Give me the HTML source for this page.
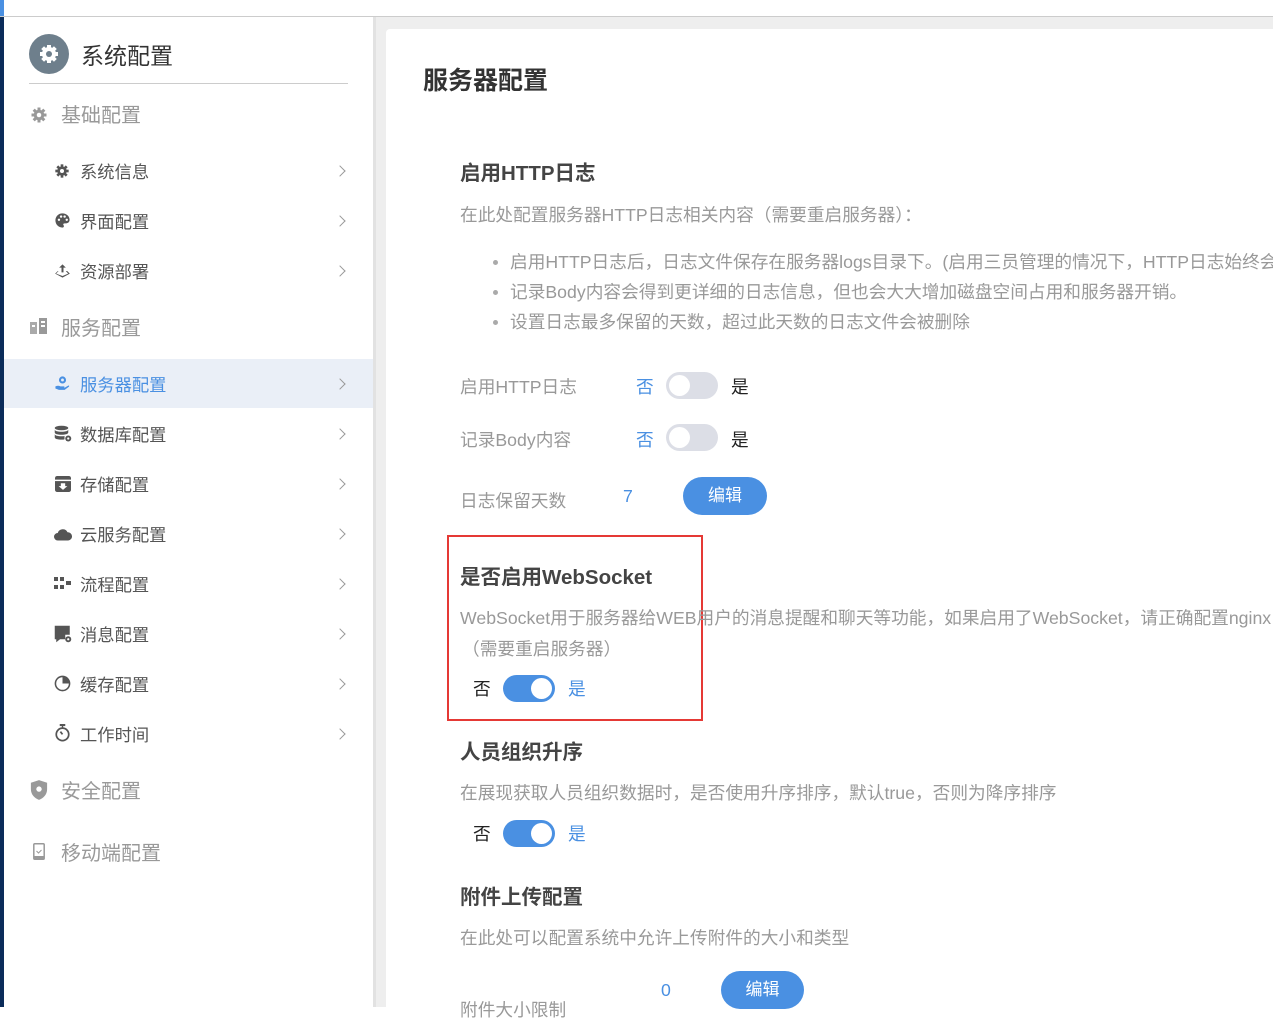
<!DOCTYPE html>
<html><head><meta charset="utf-8">
<style>
*{margin:0;padding:0;box-sizing:border-box}
body{width:1273px;height:1007px;overflow:hidden;background:#fff;position:relative;font-family:"Liberation Sans","Noto Sans CJK SC",sans-serif;}
.a{position:absolute;white-space:nowrap}
.si{font-size:17.3px;color:#555;line-height:24px}
.sg{font-size:20px;color:#999;line-height:26px}
.chev{position:absolute;left:336px;width:8px;height:8px;border-right:1.3px solid #999;border-top:1.3px solid #999;transform:rotate(45deg)}
.ic{position:absolute;left:54px}
.t{font-size:20.5px;font-weight:bold;color:#444;line-height:26px}
.d{font-size:17.7px;color:#999;line-height:24px}
.sw{position:absolute;width:52px;height:27px;border-radius:14px;background:#dcdee6}
.sw::after{content:"";position:absolute;top:3px;left:3px;width:21px;height:21px;border-radius:50%;background:#fff}
.sw.on{background:#4a90e2}
.sw.on::after{left:28px}
.btn{position:absolute;height:38px;border-radius:19px;background:#4a90e2;color:#fff;font-size:17px;line-height:38px;text-align:center}
.blue{color:#4a90e2}
</style></head><body>
<div class="a" style="left:0;top:0;width:4px;height:16px;background:#4a90e2"></div>
<div class="a" style="left:0;top:16px;width:4px;height:991px;background:#0b2c5a"></div>
<div class="a" style="left:0;top:16px;width:1273px;height:1px;background:#ccc"></div>
<div class="a" style="left:373px;top:17px;width:900px;height:990px;background:#eeeeee"></div>
<div class="a" style="left:373px;top:17px;width:3px;height:990px;background:#e2e2e2"></div>
<div class="a" style="left:386px;top:29px;width:887px;height:978px;background:#fff;border-radius:4px 0 0 0"></div>

<!-- sidebar -->
<div class="a" style="left:29px;top:34px;width:40px;height:40px;border-radius:50%;background:#6e7f8c"></div>
<svg class="a" style="left:37px;top:42px" width="24" height="24" viewBox="0 0 24 24"><g fill="#fff"><circle cx="12" cy="12" r="7"/><rect x="10" y="3" width="4" height="18"/><rect x="3" y="10" width="18" height="4"/><rect x="10" y="3" width="4" height="18" transform="rotate(45 12 12)"/><rect x="10" y="3" width="4" height="18" transform="rotate(-45 12 12)"/></g><circle cx="12" cy="12" r="3" fill="#6e7f8c"/></svg>
<div class="a" style="left:81px;top:41px;font-size:23px;color:#333;line-height:30px">系统配置</div>
<div class="a" style="left:29px;top:83px;width:319px;height:1px;background:#ccc"></div>

<svg class="a" style="left:30px;top:106px" width="18" height="18" viewBox="0 0 24 24"><g fill="#999"><circle cx="12" cy="12" r="7"/><rect x="10" y="2" width="4" height="20"/><rect x="2" y="10" width="20" height="4"/><rect x="10" y="2" width="4" height="20" transform="rotate(45 12 12)"/><rect x="10" y="2" width="4" height="20" transform="rotate(-45 12 12)"/></g><circle cx="12" cy="12" r="3" fill="#fff"/></svg>
<div class="a sg" style="left:61px;top:103px">基础配置</div>

<svg class="ic" style="top:163px" width="16" height="16" viewBox="0 0 24 24"><g fill="#555"><circle cx="12" cy="12" r="7"/><rect x="10" y="2" width="4" height="20"/><rect x="2" y="10" width="20" height="4"/><rect x="10" y="2" width="4" height="20" transform="rotate(45 12 12)"/><rect x="10" y="2" width="4" height="20" transform="rotate(-45 12 12)"/></g><circle cx="12" cy="12" r="3" fill="#fff"/></svg>
<div class="a si" style="left:80px;top:160px">系统信息</div><div class="chev" style="top:167px"></div>

<svg class="ic" style="top:212px" width="17" height="17" viewBox="0 0 24 24"><path d="M12 2C6 2 2 6.5 2 12s4.5 10 10 10c1.5 0 2-1 2-2s-1-1.5-1-2.5 1-1.5 2-1.5h2c3 0 5-2 5-5C22 6 17.5 2 12 2z" fill="#555"/><circle cx="7" cy="11" r="1.7" fill="#fff"/><circle cx="10" cy="6.5" r="1.7" fill="#fff"/><circle cx="15" cy="6.5" r="1.7" fill="#fff"/><circle cx="18" cy="11" r="1.7" fill="#fff"/></svg>
<div class="a si" style="left:80px;top:210px">界面配置</div><div class="chev" style="top:217px"></div>

<svg class="ic" style="top:263px" width="17" height="16" viewBox="0 0 24 24"><path d="M12 2l-5 5h3.5v7h3V7H17z" fill="#555"/><path d="M5 12L1 16l11 6 11-6-4-4h-2l3.5 4L12 19.5 2.5 16 6 12z" fill="#555"/></svg>
<div class="a si" style="left:80px;top:260px">资源部署</div><div class="chev" style="top:267px"></div>

<svg class="a" style="left:30px;top:318px" width="18" height="16" viewBox="0 0 18 16"><rect x="0" y="4" width="7" height="12" fill="#aaa"/><rect x="9" y="0" width="8" height="16" fill="#999"/><rect x="2" y="7" width="3" height="2" fill="#fff"/><rect x="11" y="3" width="4" height="2" fill="#fff"/><rect x="11" y="7" width="4" height="2" fill="#fff"/></svg>
<div class="a sg" style="left:61px;top:316px">服务配置</div>

<div class="a" style="left:4px;top:359px;width:369px;height:49px;background:#eaeff7"></div>
<svg class="ic" style="top:375px" width="17" height="17" viewBox="0 0 24 24"><circle cx="12" cy="7" r="5" fill="#4a90e2"/><circle cx="12" cy="7" r="2" fill="#eaeff7"/><path d="M2 16c3-1 5-1 7 0h5c1 0 1 2 0 2h-4 5l5-3c1-.5 2 .5 1 1.5L15 21H7l-5-2z" fill="#4a90e2"/></svg>
<div class="a si" style="left:80px;top:373px;color:#4a90e2">服务器配置</div><div class="chev" style="top:380px"></div>

<svg class="ic" style="top:425px" width="18" height="18" viewBox="0 0 24 24"><g fill="#555"><ellipse cx="10" cy="4" rx="9" ry="3"/><path d="M1 6c0 2 4 3 9 3s9-1 9-3v4c0 2-4 3-9 3s-9-1-9-3z"/><path d="M1 12c0 2 4 3 9 3 2 0 3 0 4-.5V19c-1 .5-2 .5-4 .5-5 0-9-1-9-3z"/><circle cx="19" cy="18" r="4"/></g><circle cx="19" cy="18" r="1.5" fill="#fff"/></svg>
<div class="a si" style="left:80px;top:423px">数据库配置</div><div class="chev" style="top:430px"></div>

<svg class="ic" style="top:476px" width="18" height="16" viewBox="0 0 24 22"><rect x="1" y="0" width="22" height="22" rx="3" fill="#555"/><rect x="1" y="5" width="22" height="2" fill="#fff"/><path d="M9 10h6v4h3l-6 5-6-5h3z" fill="#fff"/></svg>
<div class="a si" style="left:80px;top:473px">存储配置</div><div class="chev" style="top:480px"></div>

<svg class="ic" style="top:528px" width="18" height="13" viewBox="0 0 24 16"><path d="M5 16a5 5 0 010-10 7 7 0 0113-1 5.5 5.5 0 011 11z" fill="#555"/></svg>
<div class="a si" style="left:80px;top:523px">云服务配置</div><div class="chev" style="top:530px"></div>

<svg class="ic" style="top:577px" width="18" height="13" viewBox="0 0 18 13"><g fill="#555"><rect x="0" y="0" width="4" height="4"/><rect x="6" y="0" width="4" height="4"/><rect x="12" y="4" width="5" height="4"/><rect x="0" y="8" width="4" height="4"/><rect x="6" y="8" width="4" height="4"/></g></svg>
<div class="a si" style="left:80px;top:573px">流程配置</div><div class="chev" style="top:580px"></div>

<svg class="ic" style="top:625px" width="18" height="18" viewBox="0 0 24 24"><path d="M1 1h20v12h-6v6H8l-5 4v-4H1z" fill="#555"/><circle cx="19" cy="19" r="4" fill="#555"/><circle cx="19" cy="19" r="1.5" fill="#fff"/></svg>
<div class="a si" style="left:80px;top:623px">消息配置</div><div class="chev" style="top:630px"></div>

<svg class="ic" style="top:675px" width="17" height="17" viewBox="0 0 24 24"><circle cx="12" cy="12" r="10" fill="none" stroke="#555" stroke-width="2.2"/><path d="M12 2a10 10 0 0110 10H12z" fill="#555"/></svg>
<div class="a si" style="left:80px;top:673px">缓存配置</div><div class="chev" style="top:680px"></div>

<svg class="ic" style="top:724px" width="17" height="18" viewBox="0 0 24 26"><rect x="8" y="0" width="8" height="3" fill="#555"/><rect x="11" y="2" width="2" height="4" fill="#555"/><circle cx="12" cy="15" r="9" fill="none" stroke="#555" stroke-width="2.5"/><path d="M12 15l-3-4" stroke="#555" stroke-width="2.5"/></svg>
<div class="a si" style="left:80px;top:723px">工作时间</div><div class="chev" style="top:730px"></div>

<svg class="a" style="left:30px;top:780px" width="18" height="20" viewBox="0 0 20 22"><path d="M10 0l9 3v7c0 6-4 10-9 12C5 20 1 16 1 10V3z" fill="#999"/><circle cx="10" cy="10" r="3" fill="#fff"/></svg>
<div class="a sg" style="left:61px;top:779px">安全配置</div>

<svg class="a" style="left:33px;top:843px" width="12" height="17" viewBox="0 0 12 17"><rect x="0.8" y="0.8" width="10.4" height="15.4" rx="1" fill="none" stroke="#999" stroke-width="1.5"/><rect x="1" y="13" width="10" height="3" fill="#999"/><path d="M3.5 8l2 2 3-3" stroke="#999" fill="none"/></svg>
<div class="a sg" style="left:61px;top:841px">移动端配置</div>

<!-- content -->
<div class="a" style="left:423px;top:65px;font-size:25px;font-weight:bold;color:#333;line-height:32px">服务器配置</div>

<div class="a t" style="left:460px;top:161px">启用HTTP日志</div>
<div class="a d" style="left:460px;top:203px">在此处配置服务器HTTP日志相关内容（需要重启服务器）：</div>
<div class="a" style="left:493px;top:260px;width:5px;height:5px;border-radius:50%;background:#aaa"></div>
<div class="a" style="left:493px;top:290px;width:5px;height:5px;border-radius:50%;background:#aaa"></div>
<div class="a" style="left:493px;top:320px;width:5px;height:5px;border-radius:50%;background:#aaa"></div>
<div class="a d" style="left:510px;top:250px">启用HTTP日志后，日志文件保存在服务器logs目录下。(启用三员管理的情况下，HTTP日志始终会启用)</div>
<div class="a d" style="left:510px;top:280px">记录Body内容会得到更详细的日志信息，但也会大大增加磁盘空间占用和服务器开销。</div>
<div class="a d" style="left:510px;top:310px">设置日志最多保留的天数，超过此天数的日志文件会被删除</div>

<div class="a d" style="left:460px;top:375px">启用HTTP日志</div>
<div class="a d blue" style="left:636px;top:375px">否</div>
<div class="sw" style="left:666px;top:372px"></div>
<div class="a d" style="left:731px;top:375px;color:#222">是</div>

<div class="a d" style="left:460px;top:428px">记录Body内容</div>
<div class="a d blue" style="left:636px;top:428px">否</div>
<div class="sw" style="left:666px;top:424px"></div>
<div class="a d" style="left:731px;top:428px;color:#222">是</div>

<div class="a d" style="left:460px;top:489px">日志保留天数</div>
<div class="a d blue" style="left:623px;top:484px">7</div>
<div class="btn" style="left:683px;top:477px;width:84px">编辑</div>

<div class="a" style="left:447px;top:535px;width:256px;height:186px;border:2px solid #e53935"></div>
<div class="a t" style="left:460px;top:565px">是否启用WebSocket</div>
<div class="a d" style="left:460px;top:606px">WebSocket用于服务器给WEB用户的消息提醒和聊天等功能，如果启用了WebSocket，请正确配置nginx</div>
<div class="a d" style="left:462px;top:637px">（需要重启服务器）</div>
<div class="a d" style="left:473px;top:677px;color:#222">否</div>
<div class="sw on" style="left:503px;top:675px"></div>
<div class="a d blue" style="left:568px;top:677px">是</div>

<div class="a t" style="left:460px;top:740px">人员组织升序</div>
<div class="a d" style="left:460px;top:781px">在展现获取人员组织数据时，是否使用升序排序，默认true，否则为降序排序</div>
<div class="a d" style="left:473px;top:822px;color:#222">否</div>
<div class="sw on" style="left:503px;top:820px"></div>
<div class="a d blue" style="left:568px;top:822px">是</div>

<div class="a t" style="left:460px;top:885px">附件上传配置</div>
<div class="a d" style="left:460px;top:926px">在此处可以配置系统中允许上传附件的大小和类型</div>
<div class="a d blue" style="left:661px;top:978px">0</div>
<div class="btn" style="left:721px;top:971px;width:83px">编辑</div>
<div class="a d" style="left:460px;top:998px">附件大小限制</div>
</body></html>
